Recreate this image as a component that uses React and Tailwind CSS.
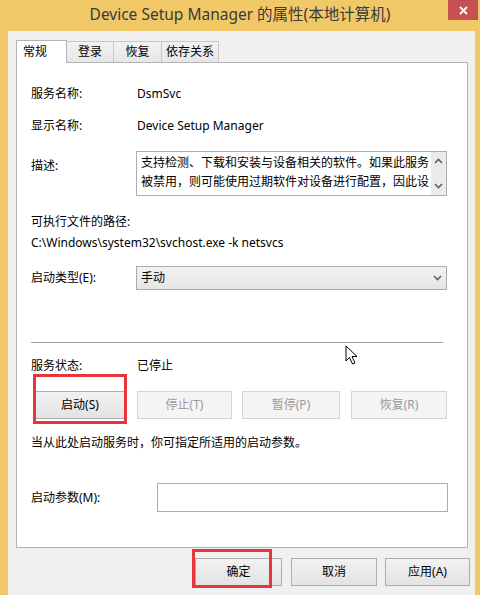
import React from "react";

const font = {
  fontFamily: '"Noto Sans", "Noto Sans CJK SC", sans-serif',
};

function Tab({ label, active, width }) {
  if (active) {
    return (
      <div
        className={`relative z-10 -mb-px flex h-[23px] items-start border border-b-0 border-[#b4b4b4] bg-white pl-[6px] pt-[2px] ${width}`}
      >
        {label}
      </div>
    );
  }
  return (
    <div
      className={`-ml-px flex h-[21px] items-center justify-center border border-b-0 border-[#c8c8c8] bg-gradient-to-b from-[#f2f2f2] to-[#e6e6e6] ${width}`}
    >
      {label}
    </div>
  );
}

function Button({ children, disabled, className = "" }) {
  return (
    <div
      className={`flex h-[28px] items-center justify-center border ${
        disabled
          ? "border-[#d5d5d5] bg-[#f4f4f4] text-[#9a9a9a]"
          : "border-[#acacac] bg-gradient-to-b from-[#f2f2f2] to-[#e3e3e3] text-black"
      } ${className}`}
    >
      {children}
    </div>
  );
}

function Chevron({ up }) {
  return (
    <svg width="9" height="6" viewBox="0 0 9 6">
      <path
        d={up ? "M1 5 L4.5 1.5 L8 5" : "M1 1 L4.5 4.5 L8 1"}
        fill="none"
        stroke="#606060"
        strokeWidth="1.6"
      />
    </svg>
  );
}

export default function App() {
  return (
    <div
      className="flex h-[595px] w-[480px] flex-col overflow-hidden bg-[#f1c868] text-[12px] text-black"
      style={font}
    >
      {/* title bar */}
      <div className="relative flex h-[31px] shrink-0 items-center justify-center pb-[1px]">
        <span className="text-[15.5px] text-[#3a3a3a]">
          Device Setup Manager 的属性(本地计算机)
        </span>
        <div className="absolute right-[2px] top-0 flex h-[20px] w-[30px] items-center justify-center bg-[#c75050]">
          <svg width="9" height="9" viewBox="0 0 9 9">
            <path d="M1 1 L8 8 M8 1 L1 8" stroke="#fff" strokeWidth="1.8" />
          </svg>
        </div>
      </div>

      {/* client area */}
      <div className="ml-[8px] mr-[5px] flex flex-1 flex-col bg-[#f0f0f0] pl-[8px] pt-[9px]">
        {/* tabs */}
        <div className="flex h-[22px] items-end">
          <Tab label="常规" active width="w-[51px]" />
          <Tab label="登录" width="w-[48px]" />
          <Tab label="恢复" width="w-[49px]" />
          <Tab label="依存关系" width="w-[58px]" />
        </div>

        {/* panel */}
        <div className="relative flex h-[486px] w-[452px] flex-col border border-[#b4b4b4] bg-white pl-[14px]">
          <div className="mt-[23px] flex h-[16px] items-center">
            <span className="w-[106px]">服务名称:</span>
            <span>DsmSvc</span>
          </div>
          <div className="mt-[16px] flex h-[16px] items-center">
            <span className="w-[106px]">显示名称:</span>
            <span>Device Setup Manager</span>
          </div>
          <div className="mt-[17px] flex items-start">
            <span className="w-[105px] pt-[6px]">描述:</span>
            <div className="flex h-[45px] w-[311px] border border-[#abadb3]">
              <div className="flex-1 pl-[4px] pt-[1px] leading-[19px]">
                <div>支持检测、下载和安装与设备相关的软件。如果此服务</div>
                <div>被禁用，则可能使用过期软件对设备进行配置，因此设</div>
              </div>
              <div className="flex w-[15px] flex-col items-center justify-between bg-[#ebebeb] py-[6px]">
                <Chevron up />
                <Chevron />
              </div>
            </div>
          </div>
          <div className="mt-[18px] flex h-[16px] items-center">可执行文件的路径:</div>
          <div className="mt-[5px] flex h-[16px] items-center">
            C:\Windows\system32\svchost.exe -k netsvcs
          </div>
          <div className="mt-[15px] flex items-center">
            <span className="w-[105px]">启动类型(E):</span>
            <div className="flex h-[24px] w-[311px] items-center justify-between border border-[#acacac] bg-gradient-to-b from-[#f2f2f2] to-[#e5e5e5] pl-[4px] pr-[4px]">
              <span>手动</span>
              <Chevron />
            </div>
          </div>

          <div className="mt-[52px] h-px w-[412px] bg-[#a0a0a0]" />

          <div className="mt-[15px] flex h-[16px] items-center">
            <span className="w-[106px]">服务状态:</span>
            <span>已停止</span>
          </div>

          <div className="mt-[17px] flex">
            <div className="relative ml-[4px]">
              <Button className="w-[90px]">启动(S)</Button>
              <div className="absolute -left-[2px] -top-[17px] h-[50px] w-[94px] border-[3px] border-[#e8353b]" />
            </div>
            <Button disabled className="ml-[12px] w-[95px]">停止(T)</Button>
            <Button disabled className="ml-[10px] w-[98px]">暂停(P)</Button>
            <Button disabled className="ml-[11px] w-[96px]">恢复(R)</Button>
          </div>

          <div className="mt-[16px] flex h-[16px] items-center">
            当从此处启动服务时，你可指定所适用的启动参数。
          </div>

          <div className="mt-[32px] flex items-center">
            <span className="w-[126px]">启动参数(M):</span>
            <div className="h-[29px] w-[291px] border border-[#abadb3] bg-white" />
          </div>

          {/* mouse cursor */}
          <svg
            className="absolute left-[328px] top-[282px]"
            width="14"
            height="20"
            viewBox="0 0 14 20"
          >
            <path
              d="M1 1 L1 16 L4.5 12.5 L7.5 19 L10 18 L7 11.5 L12 11.5 Z"
              fill="#fff"
              stroke="#000"
              strokeWidth="1"
              strokeLinejoin="round"
            />
          </svg>
        </div>

        {/* bottom buttons */}
        <div className="mt-[10px] flex pl-[179px]">
          <div className="relative">
            <Button className="w-[87px]">确定</Button>
            <div className="absolute -left-[3px] -top-[9px] h-[39px] w-[80px] border-[3px] border-[#e8353b]" />
          </div>
          <Button className="ml-[9px] w-[86px]">取消</Button>
          <Button className="ml-[8px] w-[85px]">应用(A)</Button>
        </div>
      </div>
    </div>
  );
}
